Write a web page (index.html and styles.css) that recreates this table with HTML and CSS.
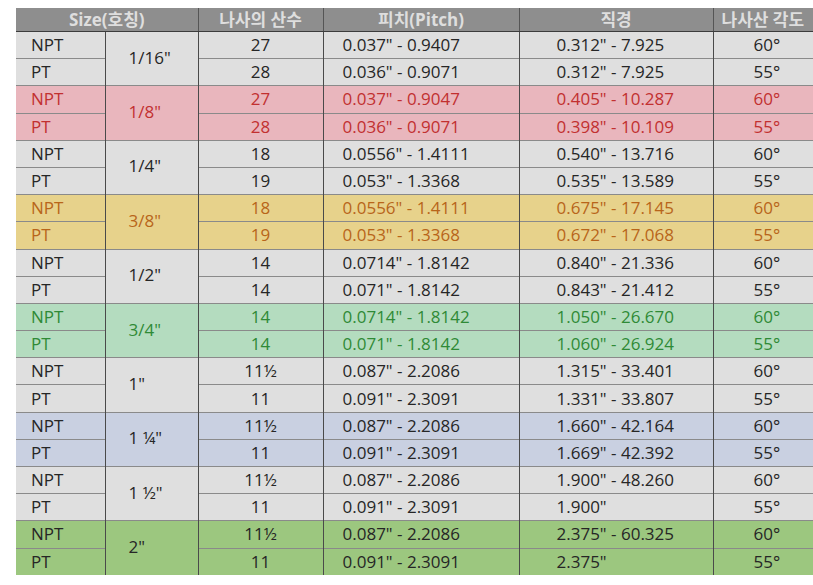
FILE: index.html
```html
<!DOCTYPE html>
<html lang="ko">
<head>
<meta charset="utf-8">
<link rel="stylesheet" href="styles.css">
</head>
<body>
<table class="spec">
  <colgroup>
    <col class="c-type"><col class="c-size"><col class="c-count"><col class="c-pitch"><col class="c-dia"><col class="c-angle">
  </colgroup>
  <thead>
    <tr><th colspan="2">Size(호칭)</th><th>나사의 산수</th><th>피치(Pitch)</th><th>직경</th><th>나사산 각도</th></tr>
  </thead>
  <tbody class="g-gray">
    <tr><td class="type">NPT</td><td class="size" rowspan="2">1/16"</td><td class="num">27</td><td class="pitch">0.037" - 0.9407</td><td class="dia">0.312" - 7.925</td><td class="num">60°</td></tr>
    <tr><td class="type">PT</td><td class="num">28</td><td class="pitch">0.036" - 0.9071</td><td class="dia">0.312" - 7.925</td><td class="num">55°</td></tr>
  </tbody>
  <tbody class="g-pink">
    <tr><td class="type">NPT</td><td class="size" rowspan="2">1/8"</td><td class="num">27</td><td class="pitch">0.037" - 0.9047</td><td class="dia">0.405" - 10.287</td><td class="num">60°</td></tr>
    <tr><td class="type">PT</td><td class="num">28</td><td class="pitch">0.036" - 0.9071</td><td class="dia">0.398" - 10.109</td><td class="num">55°</td></tr>
  </tbody>
  <tbody class="g-gray">
    <tr><td class="type">NPT</td><td class="size" rowspan="2">1/4"</td><td class="num">18</td><td class="pitch">0.0556" - 1.4111</td><td class="dia">0.540" - 13.716</td><td class="num">60°</td></tr>
    <tr><td class="type">PT</td><td class="num">19</td><td class="pitch">0.053" - 1.3368</td><td class="dia">0.535" - 13.589</td><td class="num">55°</td></tr>
  </tbody>
  <tbody class="g-yellow">
    <tr><td class="type">NPT</td><td class="size" rowspan="2">3/8"</td><td class="num">18</td><td class="pitch">0.0556" - 1.4111</td><td class="dia">0.675" - 17.145</td><td class="num">60°</td></tr>
    <tr><td class="type">PT</td><td class="num">19</td><td class="pitch">0.053" - 1.3368</td><td class="dia">0.672" - 17.068</td><td class="num">55°</td></tr>
  </tbody>
  <tbody class="g-gray">
    <tr><td class="type">NPT</td><td class="size" rowspan="2">1/2"</td><td class="num">14</td><td class="pitch">0.0714" - 1.8142</td><td class="dia">0.840" - 21.336</td><td class="num">60°</td></tr>
    <tr><td class="type">PT</td><td class="num">14</td><td class="pitch">0.071" - 1.8142</td><td class="dia">0.843" - 21.412</td><td class="num">55°</td></tr>
  </tbody>
  <tbody class="g-mint">
    <tr><td class="type">NPT</td><td class="size" rowspan="2">3/4"</td><td class="num">14</td><td class="pitch">0.0714" - 1.8142</td><td class="dia">1.050" - 26.670</td><td class="num">60°</td></tr>
    <tr><td class="type">PT</td><td class="num">14</td><td class="pitch">0.071" - 1.8142</td><td class="dia">1.060" - 26.924</td><td class="num">55°</td></tr>
  </tbody>
  <tbody class="g-gray">
    <tr><td class="type">NPT</td><td class="size" rowspan="2">1"</td><td class="num">11½</td><td class="pitch">0.087" - 2.2086</td><td class="dia">1.315" - 33.401</td><td class="num">60°</td></tr>
    <tr><td class="type">PT</td><td class="num">11</td><td class="pitch">0.091" - 2.3091</td><td class="dia">1.331" - 33.807</td><td class="num">55°</td></tr>
  </tbody>
  <tbody class="g-blue">
    <tr><td class="type">NPT</td><td class="size" rowspan="2">1 ¼"</td><td class="num">11½</td><td class="pitch">0.087" - 2.2086</td><td class="dia">1.660" - 42.164</td><td class="num">60°</td></tr>
    <tr><td class="type">PT</td><td class="num">11</td><td class="pitch">0.091" - 2.3091</td><td class="dia">1.669" - 42.392</td><td class="num">55°</td></tr>
  </tbody>
  <tbody class="g-gray">
    <tr><td class="type">NPT</td><td class="size" rowspan="2">1 ½"</td><td class="num">11½</td><td class="pitch">0.087" - 2.2086</td><td class="dia">1.900" - 48.260</td><td class="num">60°</td></tr>
    <tr><td class="type">PT</td><td class="num">11</td><td class="pitch">0.091" - 2.3091</td><td class="dia">1.900"</td><td class="num">55°</td></tr>
  </tbody>
  <tbody class="g-green">
    <tr><td class="type">NPT</td><td class="size" rowspan="2">2"</td><td class="num">11½</td><td class="pitch">0.087" - 2.2086</td><td class="dia">2.375" - 60.325</td><td class="num">60°</td></tr>
    <tr><td class="type">PT</td><td class="num">11</td><td class="pitch">0.091" - 2.3091</td><td class="dia">2.375"</td><td class="num">55°</td></tr>
  </tbody>
</table>
</body>
</html>
```

FILE: styles.css
```css
html, body {
  margin: 0;
  padding: 0;
  background: #ffffff;
  overflow: hidden;
}
body {
  width: 813px;
  height: 585px;
  padding: 8px 0 0 16px;
  box-sizing: border-box;
  font-family: "Open Sans", "Noto Sans CJK KR", sans-serif;
}
.spec {
  border-collapse: collapse;
  table-layout: fixed;
  width: 905px;
  font-size: 17px;
  color: #262626;
}
.c-type { width: 89px; }
.c-size { width: 93px; }
.c-count { width: 125px; }
.c-pitch { width: 196px; }
.c-dia { width: 194px; }
.c-angle { width: 208px; }

.spec th {
  height: 23px;
  padding: 0;
  background: #8e8e8e;
  color: #dedede;
  font-weight: bold;
  font-size: 17px;
  text-align: center;
  white-space: nowrap;
  border-left: 1px solid #555;
  border-bottom: 1px solid #3c3c3c;
  line-height: 22px;
}
.spec th:first-child { border-left: none; }
.spec th:last-child { text-align: left; padding-left: 8px; }

.spec td {
  height: 26.2px;
  padding: 0;
  border-left: 1px solid #4a4a4a;
  border-top: 1px solid #8a8a8a;
  white-space: nowrap;
  line-height: 24px;
}
.spec td.type { border-left: none; padding-left: 15px; }
.spec td.size { text-align: left; padding-left: 23px; padding-bottom: 2px; }
.spec td.num { text-align: center; }
.spec td.pitch { padding-left: 19px; }
.spec td.dia { padding-left: 37px; }
.spec td:last-child { text-align: left; padding-left: 40px; }

.g-gray td { background: #dfdfdf; }
.g-pink td { background: #e9b6bd; color: #c23030; }
.g-yellow td { background: #e7d28b; color: #b8651a; }
.g-mint td { background: #b4dcbf; color: #2f8a36; }
.g-blue td { background: #c9d0e1; }
.g-green td { background: #9cc77f; }
```
